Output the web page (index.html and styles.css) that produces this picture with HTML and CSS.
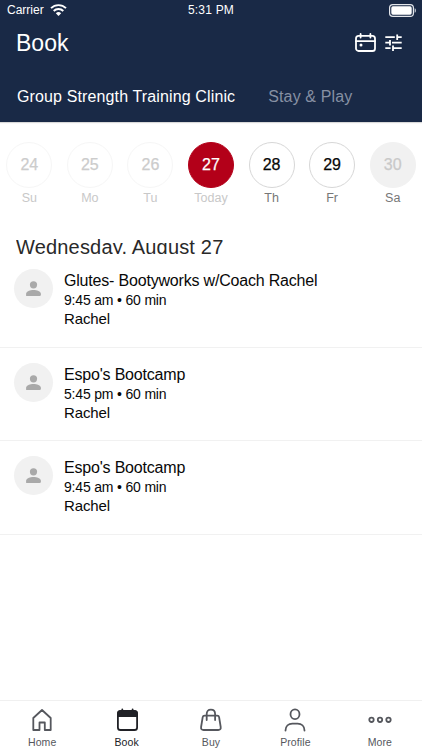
FILE: index.html
```html
<!DOCTYPE html>
<html lang="en">
<head>
<meta charset="utf-8">
<title>Book</title>
<link rel="stylesheet" href="styles.css">
</head>
<body>
<div class="app">
  <header class="header">
    <div class="status">
      <div class="carrier"><span class="carrier-name">Carrier</span>
        <svg class="wifi" width="17" height="12" viewBox="0 0 17 12" fill="none" stroke="#fff" stroke-width="1.9"><path d="M1 4.2a10.6 10.6 0 0 1 15 0"/><path d="M3.7 7a6.8 6.8 0 0 1 9.6 0"/><path d="M8.5 12 5.8 9.2a3.9 3.9 0 0 1 5.4 0z" fill="#fff" stroke="none"/></svg>
      </div>
      <span class="clock">5:31 PM</span>
      <svg class="battery" width="28" height="13" viewBox="0 0 28 13"><rect x=".6" y=".6" width="23.8" height="11.8" rx="3.2" fill="none" stroke="#e3e6eb" stroke-width="1.2"/><rect x="2.3" y="2.3" width="20.4" height="8.4" rx="1.6" fill="#fff"/><path d="M25.6 4.2c1.8.5 1.8 4.1 0 4.6z" fill="#c5cad3"/></svg>
    </div>
    <div class="title-bar">
      <h1 class="title"><span>Book</span></h1>
      <div class="actions">
        <svg width="21" height="19" viewBox="0 0 21 19" fill="none" stroke="#fff" stroke-width="1.8" stroke-linecap="round"><rect x="1" y="2.9" width="19" height="15.1" rx="2.6"/><path d="M1 8.2h19M5.6.9v3.6M15.4.9v3.6"/><circle cx="6" cy="12" r="1.5" fill="#fff" stroke="none"/></svg>
        <svg width="17" height="17" viewBox="0 0 17 17" fill="none" stroke="#fff" stroke-width="1.8"><path d="M.3 3.2h9.5M11.7 3.2h5M12.2.4v5.5M.3 8.7h4.2M7 8.7h9.7M5 6v5.5M.3 14.2h5.3M7.6 14.2h9.1M8 11.4v5.5"/></svg>
      </div>
    </div>
    <nav class="tabs"><span class="tab tab-active">Group Strength Training Clinic</span><span class="tab">Stay &amp; Play</span></nav>
  </header>
  <main class="content">
    <div class="week">
      <div class="day past"><span class="date">24</span><span class="name">Su</span></div>
      <div class="day past"><span class="date">25</span><span class="name">Mo</span></div>
      <div class="day past"><span class="date">26</span><span class="name">Tu</span></div>
      <div class="day today"><span class="date">27</span><span class="name">Today</span></div>
      <div class="day"><span class="date">28</span><span class="name">Th</span></div>
      <div class="day"><span class="date">29</span><span class="name">Fr</span></div>
      <div class="day closed"><span class="date">30</span><span class="name">Sa</span></div>
    </div>
    <h2 class="heading"><span>Wednesday, August 27</span></h2>
    <section class="classes">
      <article class="class-row">
        <div class="avatar"><svg width="15" height="15" viewBox="0 0 15 15" fill="#a9a9a9"><circle cx="7.5" cy="3.8" r="3.6"/><path d="M.1 15v-2c0-2.6 4-4 7.4-4s7.4 1.4 7.4 4v.8q0 1.2-1.2 1.2z"/></svg></div>
        <div class="info"><div class="class-name"><span>Glutes- Bootyworks w/Coach Rachel</span></div><div class="time"><span>9:45 am • 60 min</span></div><div class="coach"><span>Rachel</span></div></div>
      </article>
      <article class="class-row">
        <div class="avatar"><svg width="15" height="15" viewBox="0 0 15 15" fill="#a9a9a9"><circle cx="7.5" cy="3.8" r="3.6"/><path d="M.1 15v-2c0-2.6 4-4 7.4-4s7.4 1.4 7.4 4v.8q0 1.2-1.2 1.2z"/></svg></div>
        <div class="info"><div class="class-name"><span>Espo's Bootcamp</span></div><div class="time"><span>5:45 pm • 60 min</span></div><div class="coach"><span>Rachel</span></div></div>
      </article>
      <article class="class-row">
        <div class="avatar"><svg width="15" height="15" viewBox="0 0 15 15" fill="#a9a9a9"><circle cx="7.5" cy="3.8" r="3.6"/><path d="M.1 15v-2c0-2.6 4-4 7.4-4s7.4 1.4 7.4 4v.8q0 1.2-1.2 1.2z"/></svg></div>
        <div class="info"><div class="class-name"><span>Espo's Bootcamp</span></div><div class="time"><span>9:45 am • 60 min</span></div><div class="coach"><span>Rachel</span></div></div>
      </article>
    </section>
  </main>
  <nav class="bottom-nav">
    <div class="nav-item"><svg width="24" height="24" viewBox="0 0 24 24"><path d="M3.3 22V10L12 2l8.7 8v12h-5.9v-7.5H9.5V22z"/></svg><span>Home</span></div>
    <div class="nav-item selected"><svg width="24" height="24" viewBox="0 0 24 24"><rect x="2.9" y="3" width="19.2" height="19" rx="2.6"/><path class="solid" d="M2.3 9V5.2Q2.3 2.6 4.9 2.6h15.2q2.6 0 2.6 2.6V9z"/><path d="M7.3 1.4v3M17.6 1.4v3"/></svg><span>Book</span></div>
    <div class="nav-item"><svg width="24" height="24" viewBox="0 0 24 24"><path d="M5.6 7.6h12.6q1.6 0 1.9 1.6l1.6 9.8q.4 3-2.5 3H4.6q-2.9 0-2.5-3l1.6-9.8Q4 7.600 5.600 7.600zM7.700 12V6q0-4.300 4.200-4.300T16.100 6v6"/></svg><span>Buy</span></div>
    <div class="nav-item"><svg width="24" height="24" viewBox="0 0 24 24"><ellipse cx="12" cy="6.2" rx="4.5" ry="4.9"/><path d="M2.500 22.500c0-4.400 3.100-6.900 6.900-6.900h5.200c3.800 0 6.900 2.500 6.900 6.900"/></svg><span>Profile</span></div>
    <div class="nav-item"><svg width="24" height="24" viewBox="0 0 24 24"><circle cx="3.500" cy="11.800" r="2.200"/><circle cx="12" cy="11.800" r="2.200"/><circle cx="20.500" cy="11.800" r="2.200"/></svg><span>More</span></div>
  </nav>
</div>
</body>
</html>
```
FILE: styles.css
```css
* { box-sizing: border-box; }
body { margin: 0; background: #fff; font-family: "Liberation Sans", Arial, sans-serif; color: #080808; }
svg { display: block; flex: none; }
.app { width: 422px; height: 750px; display: flex; flex-direction: column; overflow: hidden; }
.header { height: 122px; flex: none; background: #192946; color: #fff; box-shadow: 0 1px 1px rgba(0, 0, 0, .15); }
.status { height: 20px; padding: 0 5px 0 7px; display: grid; grid-template-columns: 1fr auto 1fr; align-items: center; font-size: 12px; white-space: nowrap; }
.carrier { display: flex; align-items: center; gap: 6px; }
.clock { letter-spacing: .2px; margin-left: -2px; }
.battery { justify-self: end; }
.title-bar { height: 45px; padding: 0 20px 0 16px; display: flex; align-items: center; justify-content: space-between; }
.title { margin: 0; font-size: 23px; line-height: 28px; font-weight: 400; }
.actions { display: flex; align-items: center; gap: 9px; }
.tabs { height: 63px; padding: 0 17px; display: flex; align-items: center; gap: 33px; font-size: 16px; white-space: nowrap; }
.tab { color: #8690a3; letter-spacing: .13px; }
.tab-active { color: #fff; }
.content { flex: 1; }
.week { margin: 0 -1px; padding-top: 19.500px; display: grid; grid-template-columns: repeat(7, 1fr); }
.day { display: flex; flex-direction: column; align-items: center; gap: 3px; }
.date { width: 46px; height: 46px; border: 1px solid #d7d7d7; border-radius: 50%; display: flex; align-items: center; justify-content: center; padding-top: 1px; font-size: 16px; -webkit-text-stroke: .25px; }
.name { font-size: 12.500px; line-height: 15px; color: #777; margin-top: .500px; }
.past .date { border-color: #f6f6f6; color: #ccc; }
.past .name, .today .name { color: #c8c8c8; }
.today .date { background: #b30019; border-color: #b30019; color: #fff; }
.closed .date { background: #f1f1f1; border-color: #f1f1f1; color: #c9c9c9; }
.heading { height: 19px; margin: 29px 16px 0; overflow: hidden; font-size: 20px; line-height: 25px; letter-spacing: .18px; font-weight: 400; color: #292929; white-space: nowrap; }
.class-row { height: 93.700px; padding: 15px 14px 0; display: flex; gap: 11px; border-bottom: 1px solid #f1f1f1; }
.avatar { width: 39px; height: 39px; flex: none; border-radius: 50%; background: #f1f1f1; display: flex; align-items: center; justify-content: center; }
.info { white-space: nowrap; padding-top: 2px; }
.class-name { font-size: 16px; line-height: 20px; letter-spacing: -.19px; }
.time { font-size: 14px; line-height: 19px; letter-spacing: -.18px; }
.coach { font-size: 15px; line-height: 18px; letter-spacing: -.1px; }
.bottom-nav { height: 50px; flex: none; border-top: 1px solid #f0f0f0; display: grid; grid-template-columns: repeat(5, 1fr); color: #55575d; }
.nav-item { display: flex; flex-direction: column; align-items: center; padding-top: 7px; gap: 3px; font-size: 10.500px; line-height: 14px; letter-spacing: .1px; }
.nav-item svg { fill: none; stroke: currentColor; stroke-width: 1.800; stroke-linejoin: round; stroke-linecap: round; }
.nav-item .solid { fill: currentColor; stroke: none; }
.selected { color: #202126; }
```
